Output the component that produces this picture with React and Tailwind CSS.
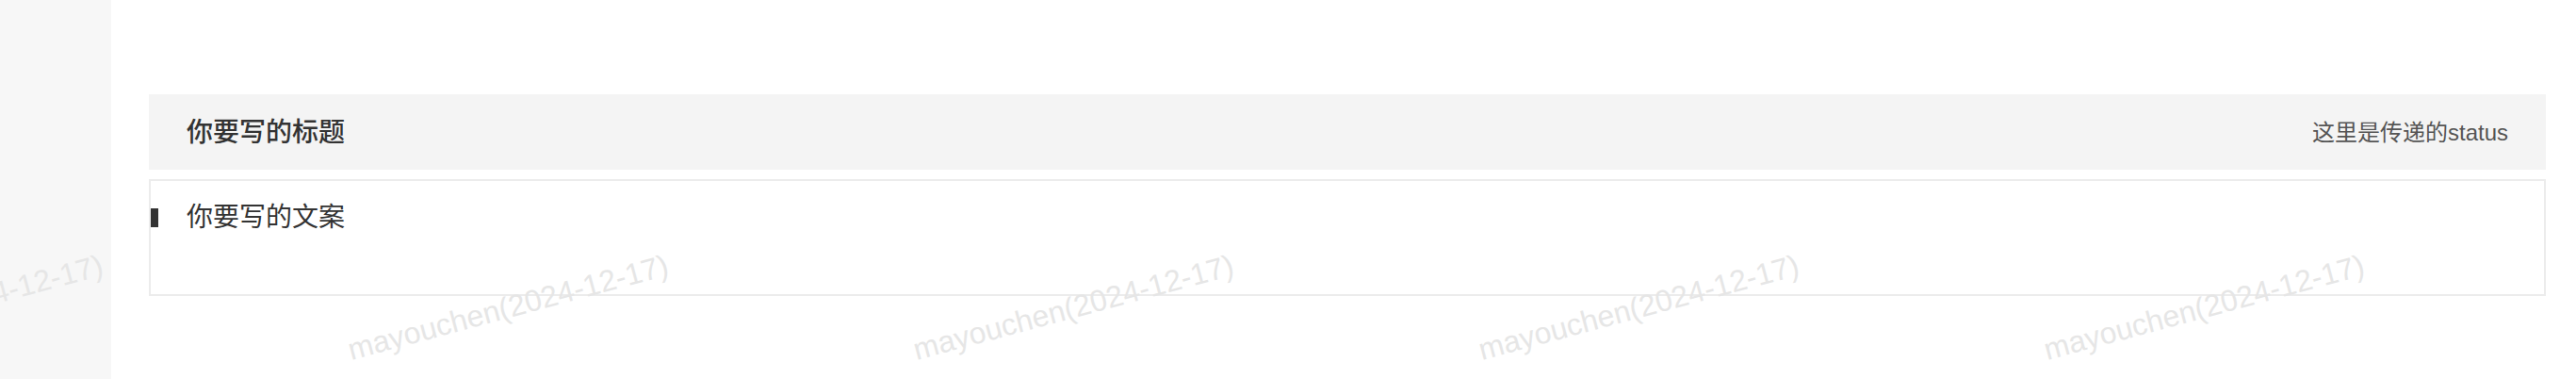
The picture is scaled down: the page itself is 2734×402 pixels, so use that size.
const font = { fontFamily: '"Liberation Sans", "Noto Sans CJK SC", sans-serif' }

function Watermark() {
  const items = [0, 1, 2, 3, 4, 5]
  return (
    <div className="pointer-events-none absolute inset-0 overflow-hidden">
      <div className="ml-[-361px] mt-[276px] flex">
        {items.map((i) => (
          <div key={i} className="flex h-[100px] w-[600px] shrink-0 items-center justify-center">
            <span className="-rotate-[15deg] whitespace-nowrap text-[32px] leading-none text-[#e6e6e6]">
              mayouchen(2024-12-17)
            </span>
          </div>
        ))}
      </div>
    </div>
  )
}

export default function App() {
  return (
    <div className="relative flex h-[402px] w-full bg-white" style={font}>
      <aside className="h-full w-[118px] shrink-0 bg-[#f7f7f7]" />

      <main className="flex-1 pl-[40px] pr-[32px] pt-[100px]">
        {/* header */}
        <div className="flex h-[80px] items-center justify-between bg-[#f4f4f4] px-[40px]">
          <h3 className="pt-[2px] text-[28px] font-medium leading-none text-[#333]">你要写的标题</h3>
          <span className="pt-[2px] text-[24px] leading-none text-[#555]">这里是传递的status</span>
        </div>

        {/* content */}
        <div className="mt-[10px] h-[124px] border-2 border-[#ececec] pt-[25px]">
          <div className="flex items-center">
            <span className="h-[20px] w-[8px] bg-[#333]" />
            <p className="ml-[30px] text-[28px] leading-[28px] text-[#333]">你要写的文案</p>
          </div>
        </div>
      </main>

      <Watermark />
    </div>
  )
}
